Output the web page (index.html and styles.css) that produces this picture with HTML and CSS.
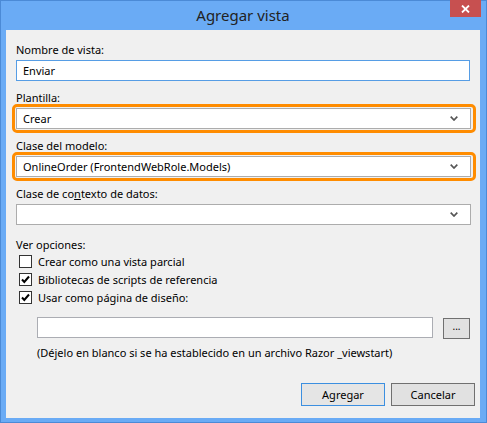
FILE: index.html
```html
<!DOCTYPE html>
<html lang="es">
<head>
<meta charset="utf-8">
<title>Agregar vista</title>
<link rel="stylesheet" href="styles.css">
</head>
<body>
<div class="window">
  <div class="titlebar">
    <span class="title">Agregar vista</span>
    <span class="close"><svg width="9" height="8" viewBox="0 0 9 8"><path d="M1 0.5 L8 7.5 M8 0.5 L1 7.5" stroke="#fff" stroke-width="1.8"/></svg></span>
  </div>
  <div class="content">
    <div class="field">
      <div class="label">Nombre de vista:</div>
      <div class="textbox focused">Enviar</div>
    </div>
    <div class="field">
      <div class="label">Plantilla:</div>
      <div class="combo ring"><span>Crear</span><svg class="chev" width="8" height="5" viewBox="0 0 8 5"><path d="M0.7 0.7 L4 4 L7.3 0.7" fill="none" stroke="#555" stroke-width="1.7"/></svg></div>
    </div>
    <div class="field">
      <div class="label">Clase del modelo:</div>
      <div class="combo ring"><span>OnlineOrder (FrontendWebRole.Models)</span><svg class="chev" width="8" height="5" viewBox="0 0 8 5"><path d="M0.7 0.7 L4 4 L7.3 0.7" fill="none" stroke="#555" stroke-width="1.7"/></svg></div>
    </div>
    <div class="field last">
      <div class="label">Clase de co<u>n</u>texto de datos:</div>
      <div class="combo"><span></span><svg class="chev" width="8" height="5" viewBox="0 0 8 5"><path d="M0.7 0.7 L4 4 L7.3 0.7" fill="none" stroke="#555" stroke-width="1.7"/></svg></div>
    </div>
    <div class="options">
      <div class="label">Ver opciones:</div>
      <div class="check"><span class="box"></span><span>Crear como una vista parcial</span></div>
      <div class="check"><span class="box"><svg width="11" height="11" viewBox="0 0 11 11"><path d="M2 5.5 L4.3 8 L9 2.5" fill="none" stroke="#000" stroke-width="2"/></svg></span><span>Bibliotecas de scripts de referencia</span></div>
      <div class="check"><span class="box"><svg width="11" height="11" viewBox="0 0 11 11"><path d="M2 5.5 L4.3 8 L9 2.5" fill="none" stroke="#000" stroke-width="2"/></svg></span><span>Usar como página de diseño:</span></div>
    </div>
    <div class="layout">
      <div class="layout-row">
        <div class="textbox plain"></div>
        <div class="browse">...</div>
      </div>
      <div class="hint">(Déjelo en blanco si se ha establecido en un archivo Razor _viewstart)</div>
    </div>
    <div class="buttons">
      <div class="btn default">Agregar</div>
      <div class="btn">Cancelar</div>
    </div>
  </div>
</div>
</body>
</html>
```
FILE: styles.css
```css
* { box-sizing: border-box; }
html, body { margin: 0; padding: 0; background: #fff; }
body { font-family: "Noto Sans", sans-serif; font-size: 11px; color: #000; }

.window {
  width: 487px;
  height: 423px;
  background: #6aabf5;
  border: 1px solid #4b8ad6;
  display: flex;
  flex-direction: column;
  padding: 0 6px 4px 5px;
}

.titlebar {
  height: 29px;
  position: relative;
  display: flex;
  align-items: center;
  justify-content: center;
  padding-bottom: 1px;
}
.title { font-size: 15px; color: #222; }
.close {
  position: absolute;
  top: -1px;
  right: -1px;
  width: 31px;
  height: 17px;
  background: #c75050;
  display: flex;
  align-items: center;
  justify-content: center;
}
.close svg { display: block; }

.content {
  flex: 1;
  background: #f0f0f0;
  padding: 12px 5px 0 10px;
  display: flex;
  flex-direction: column;
}

.label { height: 15px; line-height: 15px; margin-bottom: 3px; white-space: nowrap; }
.field { margin-bottom: 9px; }
.field.last { margin-bottom: 12px; }

.textbox {
  height: 21px;
  background: #fff;
  border: 1px solid #abadb3;
  padding: 0 6px;
  line-height: 19px;
  width: 454px;
}
.textbox.focused { border-color: #569de5; }

.combo {
  position: relative;
  height: 21px;
  width: 455px;
  background: #fff;
  border: 1px solid #acacac;
  padding: 0 6px;
  line-height: 19px;
  display: flex;
  align-items: center;
  justify-content: space-between;
}
.combo .chev { margin-right: 6px; display: block; }
.combo.ring::before {
  content: "";
  position: absolute;
  top: -5px; left: -5px; right: -6px; bottom: -5px;
  border: 3px solid #ff8c00;
  border-radius: 5px;
}

.options .label { margin-bottom: 0; }
.check { height: 18px; display: flex; align-items: center; padding-left: 3px; }
.check .box {
  width: 13px; height: 13px;
  border: 1px solid #333;
  background: #fff;
  margin-right: 6px;
  display: flex; align-items: center; justify-content: center;
}
.check .box svg { display: block; }

.layout { padding-left: 21px; margin-top: 11px; }
.layout-row { display: flex; align-items: flex-start; }
.textbox.plain { width: 396px; height: 21px; }
.browse {
  width: 27px; height: 21px;
  margin-left: 10px;
  margin-top: 1px;
  background: #e1e1e1;
  border: 1px solid #707070;
  text-align: center;
  line-height: 15px;
  font-size: 10px;
}
.hint { margin-top: 6px; height: 15px; line-height: 15px; white-space: nowrap; }

.buttons {
  margin-top: 23px;
  display: flex;
  justify-content: flex-end;
  gap: 6px;
  padding-right: 0;
}
.btn {
  width: 84px; height: 23px;
  background: #e1e1e1;
  border: 1px solid #707070;
  text-align: center;
  line-height: 21px;
}
.btn.default { border-color: #3c8fe0; background: #e5e5e5; }
```
